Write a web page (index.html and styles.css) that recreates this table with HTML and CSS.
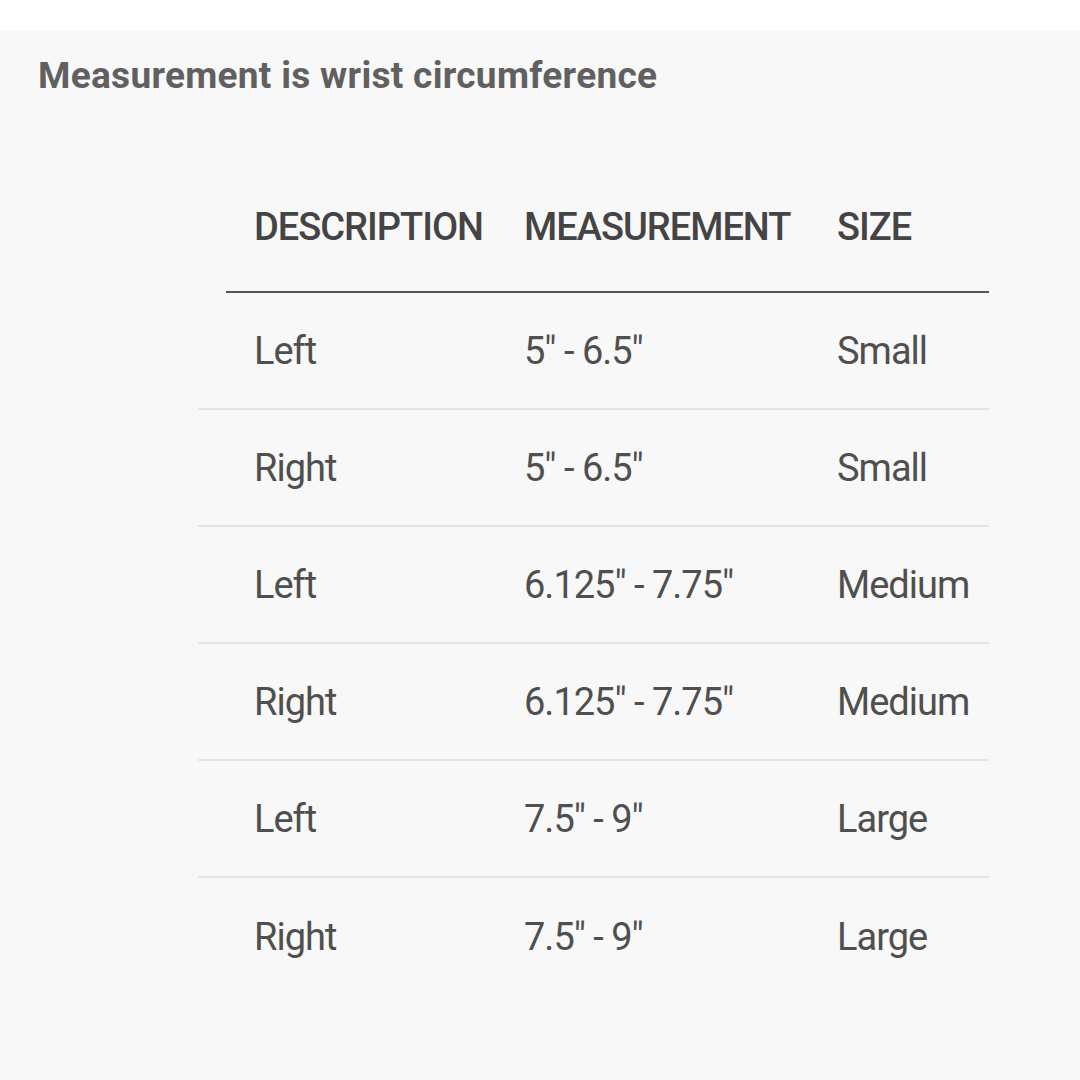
FILE: index.html
```html
<!DOCTYPE html>
<html>
<head>
<meta charset="utf-8">
<link rel="stylesheet" href="styles.css">
</head>
<body>
<div class="panel">
  <h2 class="title">Measurement is wrist circumference</h2>
  <div class="table">
    <div class="head">
      <div>DESCRIPTION</div>
      <div>MEASUREMENT</div>
      <div>SIZE</div>
    </div>
    <div class="row"><div>Left</div><div>5" - 6.5"</div><div>Small</div></div>
    <div class="row"><div>Right</div><div>5" - 6.5"</div><div>Small</div></div>
    <div class="row"><div>Left</div><div>6.125" - 7.75"</div><div>Medium</div></div>
    <div class="row"><div>Right</div><div>6.125" - 7.75"</div><div>Medium</div></div>
    <div class="row"><div>Left</div><div>7.5" - 9"</div><div>Large</div></div>
    <div class="row last"><div>Right</div><div>7.5" - 9"</div><div>Large</div></div>
  </div>
</div>
</body>
</html>
```

FILE: styles.css
```css
html, body {
  margin: 0;
  padding: 0;
  background: #ffffff;
  font-family: Roboto, "Liberation Sans", sans-serif;
}
.panel {
  margin-top: 31px;
  background: #f8f8f8;
  min-height: 1049px;
  box-sizing: border-box;
  padding: 25px 0 0 38px;
}
.title {
  margin: 0;
  font-size: 37px;
  line-height: 40px;
  font-weight: 700;
  color: #606060;
  letter-spacing: 0.3px;
}
.table {
  margin: 109px 0 0 160px;
  width: 791px;
  font-size: 38px;
  line-height: 44px;
  letter-spacing: -1px;
}
.head {
  margin-left: 28px;
  padding: 0 0 42px 28px;
  border-bottom: 2px solid #555555;
  display: grid;
  grid-template-columns: 270px 313px 1fr;
  color: #444444;
  font-weight: 500;
}
.row {
  height: 117px;
  box-sizing: border-box;
  padding: 1px 0 0 56px;
  display: grid;
  grid-template-columns: 270px 313px 1fr;
  align-items: center;
  border-bottom: 2px solid #e4e4e4;
  color: #4f4f4f;
}
.row.last {
  border-bottom: none;
}
```
